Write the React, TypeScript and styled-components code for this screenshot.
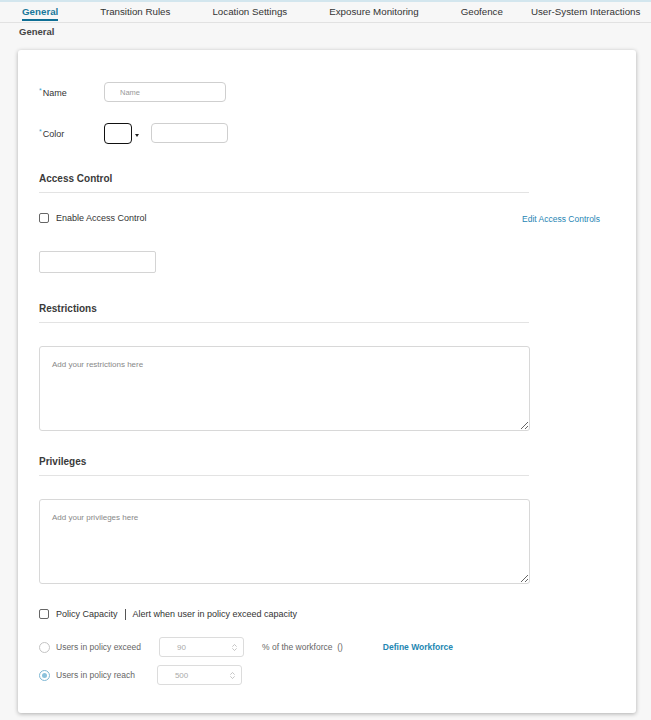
import React from 'react';
import styled, {createGlobalStyle} from 'styled-components';
import {ChevronsUpDown} from 'lucide-react';

const GlobalStyle = createGlobalStyle`
  html, body {
    margin: 0;
    padding: 0;
    background: #f7f7f7;
    font-family: "Liberation Sans", Arial, sans-serif;
    color: #333;
  }
`;

const TABS = [
  'General',
  'Transition Rules',
  'Location Settings',
  'Exposure Monitoring',
  'Geofence',
  'User-System Interactions',
];

export default function App() {
  return (
    <>
      <GlobalStyle />
      <Page>
        <TabBar>
          {TABS.map((t, i) => (
            <Tab key={t} $active={i === 0} $last={i === TABS.length - 1}>
              {t}
            </Tab>
          ))}
        </TabBar>
        <PageTitle>General</PageTitle>
        <Card>
          <FieldRow>
            <Label>
              <Req>*</Req>Name
            </Label>
            <TextInput $width={122} placeholder="Name" />
          </FieldRow>
          <FieldRow $top={21}>
            <Label>
              <Req>*</Req>Color
            </Label>
            <Swatch />
            <Caret />
            <TextInput $width={77} />
          </FieldRow>

          <SectionTitle $top={30}>Access Control</SectionTitle>
          <CheckRow>
            <CheckLabel>
              <Box />
              Enable Access Control
            </CheckLabel>
            <Link>Edit Access Controls</Link>
          </CheckRow>
          <PlainInput />

          <SectionTitle $top={30}>Restrictions</SectionTitle>
          <Area placeholder="Add your restrictions here" />

          <SectionTitle $top={25} $pad={7}>
            Privileges
          </SectionTitle>
          <Area placeholder="Add your privileges here" />

          <PolicyRow>
            <Box />
            <span>Policy Capacity</span>
            <Divider />
            <span>Alert when user in policy exceed capacity</span>
          </PolicyRow>

          <RadioRow $top={17}>
            <Radio />
            <RadioLabel>Users in policy exceed</RadioLabel>
            <NumberBox $left={18}>
              <span>90</span>
              <ChevronsUpDown size={9} strokeWidth={1.5} />
            </NumberBox>
            <Muted>% of the workforce&nbsp;&nbsp;()</Muted>
            <BoldLink>Define Workforce</BoldLink>
          </RadioRow>
          <RadioRow $top={8}>
            <Radio $checked />
            <RadioLabel>Users in policy reach</RadioLabel>
            <NumberBox $left={22}>
              <span>500</span>
              <ChevronsUpDown size={9} strokeWidth={1.5} />
            </NumberBox>
          </RadioRow>
        </Card>
      </Page>
    </>
  );
}

const Page = styled.div`
  border-top: 2px solid #d3e6ee;
  padding-bottom: 8px;
`;

const TabBar = styled.div`
  display: flex;
  height: 20px;
  padding-left: 1px;
  border-bottom: 1px solid #e2e2e2;
  overflow: hidden;
`;

const Tab = styled.div<{$active?: boolean; $last?: boolean}>`
  position: relative;
  padding: 0 21px 0 ${p => (p.$last ? 7 : 21)}px;
  font-size: 9.75px;
  line-height: 20px;
  color: ${p => (p.$active ? '#17779b' : '#333')};
  font-weight: ${p => (p.$active ? 700 : 400)};
  white-space: nowrap;

  &::after {
    content: '';
    display: ${p => (p.$active ? 'block' : 'none')};
    position: absolute;
    left: 21px;
    right: 21px;
    bottom: 1px;
    height: 2px;
    background: #0f6f95;
  }
`;

const PageTitle = styled.div`
  padding-left: 19px;
  margin-top: 2px;
  font-size: 9.5px;
  font-weight: 700;
  color: #444;
  line-height: 13px;
`;

const Card = styled.div`
  margin: 12px 15px 0 18px;
  background: #fff;
  border-radius: 3px;
  box-shadow: 0 1px 4px rgba(0, 0, 0, 0.3);
  padding: 32px 21px 28px 21px;
  display: flex;
  flex-direction: column;
  align-items: flex-start;
`;

const FieldRow = styled.div<{$top?: number}>`
  display: flex;
  align-items: center;
  height: 20px;
  margin-top: ${p => p.$top ?? 0}px;
`;

const Label = styled.div`
  width: 65px;
  font-size: 9px;
  color: #333;
`;

const Req = styled.span`
  color: #3aa0d0;
  font-size: 7px;
  vertical-align: 3px;
  margin-right: 1px;
`;

const TextInput = styled.input<{$width: number}>`
  box-sizing: border-box;
  width: ${p => p.$width}px;
  height: 20px;
  border: 1px solid #cfcfcf;
  border-radius: 4px;
  padding: 0 0 0 15px;
  font-family: inherit;
  font-size: 7.5px;
  outline: none;

  &::placeholder {
    color: #999;
  }
`;

const Swatch = styled.div`
  box-sizing: border-box;
  width: 28px;
  height: 21px;
  border: 1px solid #111;
  border-radius: 4px;
`;

const Caret = styled.div`
  width: 0;
  height: 0;
  margin: 4px 12px 0 3px;
  border-left: 2px solid transparent;
  border-right: 2px solid transparent;
  border-top: 3px solid #222;
`;

const SectionTitle = styled.div<{$top: number; $pad?: number}>`
  box-sizing: border-box;
  width: 490px;
  margin-top: ${p => p.$top}px;
  padding-bottom: ${p => p.$pad ?? 7}px;
  border-bottom: 1px solid #e3e3e3;
  font-size: 10px;
  font-weight: 700;
  line-height: 12px;
  color: #3a3a3a;
`;

const CheckRow = styled.div`
  display: flex;
  align-items: center;
  justify-content: space-between;
  width: 561px;
  height: 12px;
  margin-top: 19px;
`;

const CheckLabel = styled.div`
  display: flex;
  align-items: center;
  font-size: 9px;
  color: #333;
`;

const Box = styled.span`
  box-sizing: border-box;
  display: inline-block;
  width: 10px;
  height: 10px;
  border: 1px solid #666;
  border-radius: 2px;
  margin-right: 7px;
`;

const Link = styled.span`
  font-size: 8.5px;
  color: #1f86b4;
  margin-top: 2px;
`;

const PlainInput = styled.div`
  box-sizing: border-box;
  width: 117px;
  height: 22px;
  margin-top: 27px;
  border: 1px solid #d4d4d4;
  border-radius: 2px;
`;

const Area = styled.textarea`
  box-sizing: border-box;
  display: block;
  width: 491px;
  height: 85px;
  margin-top: 23px;
  border: 1px solid #d8d8d8;
  border-radius: 3px;
  padding: 13px 12px;
  font-family: inherit;
  font-size: 8px;
  outline: none;

  &::placeholder {
    color: #888;
  }
`;

const PolicyRow = styled.div`
  display: flex;
  align-items: center;
  height: 12px;
  margin-top: 24px;
  font-size: 9px;
  color: #333;
`;

const Divider = styled.span`
  width: 1px;
  height: 11px;
  background: #555;
  margin: 0 7px;
`;

const RadioRow = styled.div<{$top: number}>`
  display: flex;
  align-items: center;
  height: 20px;
  margin-top: ${p => p.$top}px;
`;

const Radio = styled.span<{$checked?: boolean}>`
  box-sizing: border-box;
  width: 11px;
  height: 11px;
  border-radius: 50%;
  border: 1px solid ${p => (p.$checked ? '#7fb8d4' : '#c4c4c4')};
  margin-right: 6px;
  display: flex;
  align-items: center;
  justify-content: center;

  &::after {
    content: '';
    display: ${p => (p.$checked ? 'block' : 'none')};
    width: 5px;
    height: 5px;
    border-radius: 50%;
    background: #8cc2dc;
  }
`;

const RadioLabel = styled.span`
  font-size: 8.5px;
  color: #666;
`;

const NumberBox = styled.div<{$left: number}>`
  box-sizing: border-box;
  display: flex;
  align-items: center;
  justify-content: space-between;
  width: 85px;
  height: 20px;
  margin-left: ${p => p.$left}px;
  padding: 0 4px 0 17px;
  border: 1px solid #dcdcdc;
  border-radius: 3px;
  font-size: 8px;
  color: #aaa;

  svg {
    color: #999;
  }
`;

const Muted = styled.span`
  margin-left: 18px;
  font-size: 8.5px;
  color: #666;
`;

const BoldLink = styled.span`
  margin-left: 40px;
  font-size: 8.5px;
  font-weight: 700;
  color: #2387b2;
`;
